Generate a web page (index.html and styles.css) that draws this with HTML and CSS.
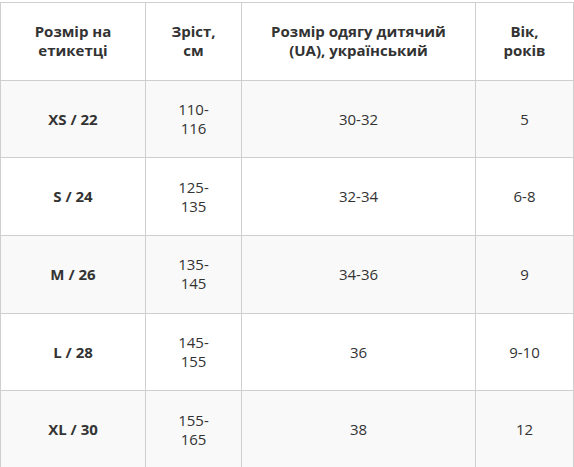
FILE: index.html
```html
<!DOCTYPE html>
<html lang="uk">
<head>
<meta charset="utf-8">
<link rel="stylesheet" href="styles.css">
</head>
<body>
<table class="size-table">
  <colgroup>
    <col class="c1"><col class="c2"><col class="c3"><col class="c4">
  </colgroup>
  <thead>
    <tr>
      <th>Розмір на<br>етикетці</th>
      <th>Зріст,<br>см</th>
      <th>Розмір одягу дитячий<br>(UA), український</th>
      <th>Вік,<br>років</th>
    </tr>
  </thead>
  <tbody>
    <tr class="odd"><td class="label">XS / 22</td><td>110-<br>116</td><td>30-32</td><td>5</td></tr>
    <tr><td class="label">S / 24</td><td>125-<br>135</td><td>32-34</td><td>6-8</td></tr>
    <tr class="odd"><td class="label">M / 26</td><td>135-<br>145</td><td>34-36</td><td>9</td></tr>
    <tr><td class="label">L / 28</td><td>145-<br>155</td><td>36</td><td>9-10</td></tr>
    <tr class="odd"><td class="label">XL / 30</td><td>155-<br>165</td><td>38</td><td>12</td></tr>
  </tbody>
</table>
</body>
</html>
```
FILE: styles.css
```css
html, body {
  margin: 0;
  padding: 0;
  background: #fff;
}
body {
  padding-top: 2px;
  font-family: "Open Sans", "Liberation Sans", sans-serif;
  font-size: 15px;
  color: #333;
}
.size-table {
  width: 573px;
  border-collapse: collapse;
  table-layout: fixed;
}
.c1 { width: 145px; }
.c2 { width: 96px; }
.c3 { width: 234px; }
.c4 { width: 98px; }
.size-table th,
.size-table td {
  border: 1px solid #cfcfcf;
  text-align: center;
  vertical-align: middle;
  line-height: 19px;
  padding: 19.35px 8px;
}
.size-table th {
  font-weight: 700;
  color: #333;
}
.size-table td.label {
  font-weight: 700;
}
.size-table tr.odd td {
  background: #f9f9f9;
}
```
